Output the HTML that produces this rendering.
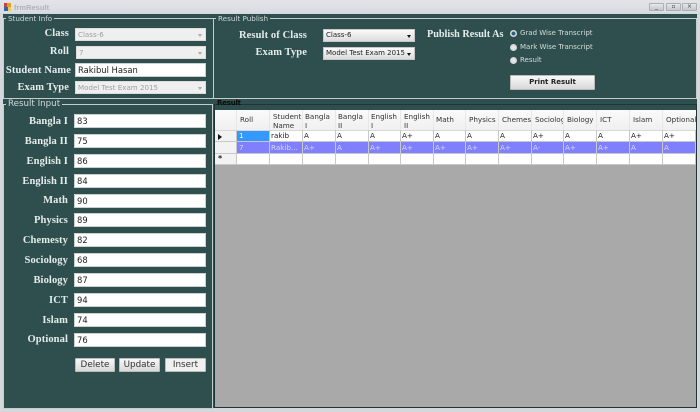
<!DOCTYPE html>
<html><head><meta charset="utf-8"><style>
html,body{margin:0;padding:0}
body{width:700px;height:412px;position:relative;overflow:hidden;background:#d4d8dc;font-family:"DejaVu Sans","Liberation Sans",sans-serif}
div,span{position:absolute;box-sizing:border-box;white-space:nowrap}
.bg{left:3px;top:14px;width:694px;height:394px;background:#2f4f4f}
.g{border:1px solid #c4cccc}
.gt{background:#2f4f4f;color:#d0d8d8;font-size:7.2px;line-height:9px;padding:0 2px;height:9px;top:14px}
.l{font-family:"Liberation Serif",serif;font-weight:bold;font-size:10.5px;line-height:14px;color:#e6ecec;text-align:right;height:14px;letter-spacing:.1px;margin-top:1px}
.i{background:#fff;border:1px solid #c8d0d0;height:14px;left:74px;width:132px;font-size:8.4px;line-height:12px;color:#222;padding-left:2px}
.c{background:#efefef;border:1px solid #dcdcdc;height:13px;font-size:7.1px;line-height:11px;color:#a0a0a0;padding-left:2px}
.c b{position:absolute;right:3px;top:5px;width:0;height:0;border:2px solid transparent;border-top:3px solid #aaa;border-bottom:0}
.d{background:linear-gradient(#fafafa,#dcdcdc);border:1px solid #c8c8c8;height:13px;font-size:7px;line-height:11px;color:#222;padding-left:2px;left:323px;width:92px}
.d b{position:absolute;right:3px;top:5px;width:0;height:0;border:2.5px solid transparent;border-top:3px solid #111;border-bottom:0}
.b{background:linear-gradient(#f8f8f8,#d8d8d8);border:1px solid #bbb;border-radius:1px;height:14px;top:358px;font-size:8.8px;line-height:12px;color:#333;text-align:center}
.r{left:510px;width:7px;height:7px;border-radius:50%;background:radial-gradient(#eee,#c4c8c8)}
.rt{left:520px;font-size:7px;line-height:10px;color:#d4dcdc;height:10px}
.h{font-size:7.2px;line-height:9px;color:#333;white-space:normal}
.t{font-size:7.2px;line-height:11px;color:#222;height:11px}
.w{color:#d8d8ff}
.vl{width:1px;background:#c8c8c8;top:130px;height:35px}
.hh{width:1px;background:#e8e8e8;top:110px;height:20px}
.wb{top:3px;height:8px;width:15px;background:linear-gradient(#e6e8ea,#c4c8cc);border:1px solid #aab0b6;border-radius:1px;font-size:6px;line-height:6px;text-align:center;color:#444}
</style></head><body>
<div style="left:0;top:0;width:700px;height:13px;background:linear-gradient(#e2e4e8,#d8dce0)"></div>
<div style="left:4px;top:3px;width:4px;height:4px;background:#d04030"></div>
<div style="left:7px;top:3px;width:4px;height:4px;background:#e0a020"></div>
<div style="left:4px;top:7px;width:4px;height:4px;background:#3060c0"></div>
<div style="left:8px;top:7px;width:3px;height:4px;background:#e8d040"></div>
<div style="left:14px;top:3px;font-family:'Liberation Sans',sans-serif;font-size:7.5px;line-height:10px;font-weight:bold;color:#b0b4b8">frmResult</div>
<div class="wb" style="left:649px">_</div><div class="wb" style="left:666px">▫</div><div class="wb" style="left:682px">×</div>
<div class="bg"></div>

<div class="g" style="left:3px;top:18px;width:211px;height:81px"></div>
<div class="gt" style="left:6px">Student Info</div>
<div class="g" style="left:213px;top:18px;width:484px;height:81px"></div>
<div class="gt" style="left:216px">Result Publish</div>
<div class="g" style="left:3px;top:104px;width:210px;height:305px"></div>
<div class="gt" style="left:6px;top:99px;height:11px;line-height:11px;font-size:8.7px">Result Input</div>
<div class="g" style="left:214px;top:104px;width:483px;height:304px;border-color:#1e3636"></div>
<div style="left:215px;top:110px;width:481px;height:297px;background:#a9a9a9"></div>
<div style="left:217px;top:99px;height:9px;line-height:9px;color:#0a0a0a;font-size:7px;font-weight:bold;letter-spacing:-.2px">Result</div>

<div class="l" style="left:0;width:69px;top:26px">Class</div>
<div class="l" style="left:0;width:69px;top:44px">Roll</div>
<div class="l" style="left:0;width:71px;top:63px">Student Name</div>
<div class="l" style="left:0;width:69px;top:80px">Exam Type</div>
<div class="c" style="left:75px;top:28px;width:131px">Class-6<b></b></div>
<div class="c" style="left:76px;top:46px;width:130px">7<b></b></div>
<div class="i" style="left:75px;top:63px;width:131px">Rakibul Hasan</div>
<div class="c" style="left:75px;top:81px;width:131px">Model Test Exam 2015<b></b></div>

<div class="l" style="left:0;width:68px;top:114px">Bangla I</div><div class="i" style="top:114px">83</div>
<div class="l" style="left:0;width:68px;top:134px">Bangla II</div><div class="i" style="top:134px">75</div>
<div class="l" style="left:0;width:68px;top:154px">English I</div><div class="i" style="top:154px">86</div>
<div class="l" style="left:0;width:68px;top:174px">English II</div><div class="i" style="top:174px">84</div>
<div class="l" style="left:0;width:68px;top:193px">Math</div><div class="i" style="top:194px">90</div>
<div class="l" style="left:0;width:68px;top:213px">Physics</div><div class="i" style="top:213px">89</div>
<div class="l" style="left:0;width:68px;top:233px">Chemesty</div><div class="i" style="top:233px">82</div>
<div class="l" style="left:0;width:68px;top:253px">Sociology</div><div class="i" style="top:253px">68</div>
<div class="l" style="left:0;width:68px;top:273px">Biology</div><div class="i" style="top:273px">87</div>
<div class="l" style="left:0;width:68px;top:293px">ICT</div><div class="i" style="top:293px">94</div>
<div class="l" style="left:0;width:68px;top:313px">Islam</div><div class="i" style="top:313px">74</div>
<div class="l" style="left:0;width:68px;top:332px">Optional</div><div class="i" style="top:333px">76</div>
<div class="b" style="left:75px;width:40px">Delete</div>
<div class="b" style="left:119px;width:41px">Update</div>
<div class="b" style="left:165px;width:41px;background:#f0f0f0">Insert</div>

<div class="l" style="left:220px;width:87px;top:28px">Result of Class</div>
<div class="l" style="left:220px;width:87px;top:45px">Exam Type</div>
<div class="d" style="top:29px">Class-6<b></b></div>
<div class="d" style="top:47px">Model Test Exam 2015<b></b></div>
<div class="l" style="left:427px;top:27px;text-align:left;font-size:10.2px;letter-spacing:0">Publish Result As</div>
<div class="r" style="top:30px;background:radial-gradient(circle,#2f5f80 35%,#d8dcdc 45%)"></div><div class="rt" style="top:28px">Grad Wise Transcript</div>
<div class="r" style="top:44px"></div><div class="rt" style="top:42px">Mark Wise Transcript</div>
<div class="r" style="top:57px"></div><div class="rt" style="top:55px">Result</div>
<div class="b" style="left:510px;top:75px;width:85px;height:15px;font-weight:bold;font-size:7px;line-height:13px;color:#222">Print Result</div>

<div style="left:215px;top:110px;width:481px;height:55px;background:#fff"></div>
<div style="left:215px;top:110px;width:481px;height:20px;background:linear-gradient(#fafafa,#f0f0f0)"></div>
<div style="left:215px;top:130px;width:21px;height:35px;background:#f2f2f2"></div>
<div style="left:236px;top:142px;width:460px;height:11px;background:#8080ff"></div>
<div style="left:236px;top:131px;width:33px;height:10px;background:#3399ff"></div>
<div style="left:215px;top:141px;width:481px;height:1px;background:#c8c8c8"></div>
<div style="left:215px;top:153px;width:481px;height:1px;background:#c8c8c8"></div>
<div style="left:215px;top:164px;width:481px;height:1px;background:#c8c8c8"></div>
<div style="left:215px;top:130px;width:481px;height:1px;background:#d8d8d8"></div>
<div class="vl" style="left:236px"></div><div class="vl" style="left:269px"></div><div class="vl" style="left:302px"></div><div class="vl" style="left:335px"></div><div class="vl" style="left:368px"></div><div class="vl" style="left:400px"></div><div class="vl" style="left:433px"></div><div class="vl" style="left:465px"></div><div class="vl" style="left:498px"></div><div class="vl" style="left:531px"></div><div class="vl" style="left:563px"></div><div class="vl" style="left:596px"></div><div class="vl" style="left:629px"></div><div class="vl" style="left:662px"></div><div class="vl" style="left:695px"></div>
<div class="hh" style="left:236px"></div><div class="hh" style="left:269px"></div><div class="hh" style="left:302px"></div><div class="hh" style="left:335px"></div><div class="hh" style="left:368px"></div><div class="hh" style="left:400px"></div><div class="hh" style="left:433px"></div><div class="hh" style="left:465px"></div><div class="hh" style="left:498px"></div><div class="hh" style="left:531px"></div><div class="hh" style="left:563px"></div><div class="hh" style="left:596px"></div><div class="hh" style="left:629px"></div><div class="hh" style="left:662px"></div>

<div class="h" style="left:240px;top:115px">Roll</div>
<div class="h" style="left:273px;top:112px">Student<br>Name</div>
<div class="h" style="left:305px;top:112px">Bangla<br>I</div>
<div class="h" style="left:338px;top:112px">Bangla<br>II</div>
<div class="h" style="left:371px;top:112px">English<br>I</div>
<div class="h" style="left:404px;top:112px">English<br>II</div>
<div class="h" style="left:436px;top:115px">Math</div>
<div class="h" style="left:469px;top:115px">Physics</div>
<div class="h" style="left:502px;top:115px;width:29px;overflow:hidden;white-space:nowrap">Chemesty</div>
<div class="h" style="left:535px;top:115px;width:28px;overflow:hidden;white-space:nowrap">Sociology</div>
<div class="h" style="left:567px;top:115px">Biology</div>
<div class="h" style="left:600px;top:115px">ICT</div>
<div class="h" style="left:633px;top:115px">Islam</div>
<div class="h" style="left:666px;top:115px">Optional</div>

<div style="left:218px;top:134px;width:0;height:0;border:3px solid transparent;border-left:4px solid #111;border-right:0"></div>
<div style="left:218px;top:155px;font-size:8px;line-height:8px;color:#222;font-weight:bold">*</div>

<div class="t" style="left:239px;top:130px;color:#fff">1</div>
<div class="t" style="left:271px;top:130px">rakib</div>
<div class="t" style="left:304px;top:130px">A</div><div class="t" style="left:337px;top:130px">A</div><div class="t" style="left:370px;top:130px">A</div><div class="t" style="left:402px;top:130px">A+</div><div class="t" style="left:435px;top:130px">A</div><div class="t" style="left:467px;top:130px">A</div><div class="t" style="left:500px;top:130px">A</div><div class="t" style="left:533px;top:130px">A+</div><div class="t" style="left:565px;top:130px">A</div><div class="t" style="left:598px;top:130px">A</div><div class="t" style="left:631px;top:130px">A+</div><div class="t" style="left:664px;top:130px">A+</div>

<div class="t w" style="left:239px;top:142px">7</div>
<div class="t w" style="left:271px;top:142px">Rakib...</div>
<div class="t w" style="left:304px;top:142px">A+</div><div class="t w" style="left:337px;top:142px">A</div><div class="t w" style="left:370px;top:142px">A+</div><div class="t w" style="left:402px;top:142px">A+</div><div class="t w" style="left:435px;top:142px">A+</div><div class="t w" style="left:467px;top:142px">A+</div><div class="t w" style="left:500px;top:142px">A+</div><div class="t w" style="left:533px;top:142px">A-</div><div class="t w" style="left:565px;top:142px">A+</div><div class="t w" style="left:598px;top:142px">A+</div><div class="t w" style="left:631px;top:142px">A</div><div class="t w" style="left:664px;top:142px">A</div>
</body></html>
